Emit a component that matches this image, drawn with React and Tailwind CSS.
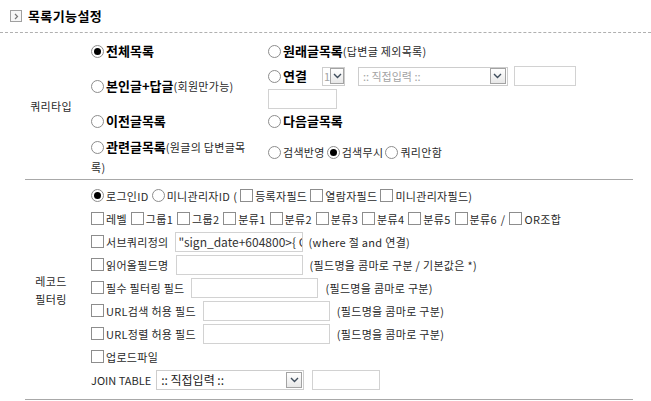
import React from 'react';

function Radio({ checked }) {
  return (
    <span className="flex h-[13px] w-[13px] shrink-0 items-center justify-center rounded-full border border-[#8d8d8d] bg-white">
      {checked && <span className="h-[7px] w-[7px] rounded-full bg-black" />}
    </span>
  );
}

function Check() {
  return <span className="inline-block h-[13px] w-[13px] shrink-0 border border-[#8d8d8d] bg-white" />;
}

function DropBtn({ small }) {
  return (
    <span
      className={`flex h-[16px] shrink-0 items-center justify-center border border-[#a3a3a3] bg-linear-to-b from-white to-[#e8e8e8] ${small ? 'w-[14px]' : 'w-[16px]'}`}
    >
      <svg width="9" height="6" viewBox="0 0 9 6">
        <path d="M1 1l3.5 3.5L8 1" fill="none" stroke="#3f4d5c" strokeWidth="1.4" />
      </svg>
    </span>
  );
}

function Select({ className, text, dim, small }) {
  return (
    <div
      className={`flex h-[19px] items-center justify-between border border-[#cdcdcd] bg-white pr-[1px] tracking-normal ${small ? 'pl-[1px]' : 'pl-[4px]'} ${dim ? 'text-[11px] text-[#a3a3a3]' : 'text-[12px] text-[#222]'} ${className}`}
    >
      <span className="whitespace-nowrap leading-none">{text}</span>
      <DropBtn small={small} />
    </div>
  );
}

function Box({ className }) {
  return <div className={`h-[20px] shrink-0 border border-[#d2d2d2] bg-white ${className}`} />;
}

function Opt({ children, radio, checked }) {
  return (
    <span className="flex items-center gap-[2px]">
      {radio ? <Radio checked={checked} /> : <Check />}
      <span className="whitespace-nowrap">{children}</span>
    </span>
  );
}

function Big({ children, note }) {
  return (
    <span className="whitespace-nowrap">
      <span className="text-[13px] font-bold tracking-normal text-black">{children}</span>
      {note && <span>{note}</span>}
    </span>
  );
}

export default function App() {
  const filterRows = [
    { label: '읽어올필드명', note: '(필드명을 콤마로 구분 / 기본값은 *)' },
    { label: '필수 필터링 필드', note: '(필드명을 콤마로 구분)' },
    { label: 'URL검색 허용 필드', note: '(필드명을 콤마로 구분)' },
    { label: 'URL정렬 허용 필드', note: '(필드명을 콤마로 구분)' },
  ];

  return (
    <div className="h-[401px] w-[651px] overflow-hidden bg-white font-['Noto_Sans_CJK_KR',sans-serif] text-[11px] leading-[20px] tracking-[0.3px] text-[#2a2a2a]">
      {/* header */}
      <div className="flex h-[33px] items-center gap-[6px] border-b border-dashed border-[#b0b0b0] pl-[10px]">
        <span className="flex h-[12px] w-[12px] items-center justify-center border border-[#a0a0a0] bg-[#f7f7f7]">
          <svg width="5" height="7" viewBox="0 0 5 7">
            <path d="M1 1l2.5 2.5L1 6" fill="none" stroke="#777" strokeWidth="1.2" />
          </svg>
        </span>
        <span className="text-[13px] font-bold tracking-[0.4px] text-black">목록기능설정</span>
      </div>

      <div className="ml-[25px] w-[608px]">
        {/* 쿼리타입 */}
        <div className="flex h-[147px] border-b border-[#a8a8a8]">
          <div className="flex w-[52px] items-center justify-center">쿼리타입</div>
          <div className="flex flex-1 flex-col pl-[14px] pt-[6px]">
            <div className="flex h-[24px] items-center">
              <div className="w-[177px]">
                <span className="flex items-center gap-[2px]">
                  <Radio checked />
                  <Big>전체목록</Big>
                </span>
              </div>
              <span className="flex items-center gap-[2px]">
                <Radio />
                <Big note="(답변글 제외목록)">원래글목록</Big>
              </span>
            </div>

            <div className="flex h-[46px]">
              <div className="flex w-[177px] items-center">
                <span className="flex items-center gap-[2px]">
                  <Radio />
                  <Big note="(회원만가능)">본인글+답글</Big>
                </span>
              </div>
              <div className="flex flex-col">
                <div className="flex h-[26px] items-center">
                  <span className="flex items-center gap-[2px]">
                    <Radio />
                    <Big>연결</Big>
                  </span>
                  <Select className="ml-[15px] w-[23px]" text="1" dim small />
                  <Select className="ml-[13px] w-[150px]" text=":: 직접입력 ::" dim />
                  <Box className="ml-[6px] w-[62px] h-[19px]" />
                </div>
                <Box className="w-[69px]" />
              </div>
            </div>

            <div className="flex h-[24px] items-center">
              <div className="w-[177px]">
                <span className="flex items-center gap-[2px]">
                  <Radio />
                  <Big>이전글목록</Big>
                </span>
              </div>
              <span className="flex items-center gap-[2px]">
                <Radio />
                <Big>다음글목록</Big>
              </span>
            </div>

            <div className="flex flex-1">
              <div className="w-[177px] pt-[4px]">
                <span className="flex items-center gap-[2px]">
                  <Radio />
                  <Big note="(원글의 답변글목">관련글목록</Big>
                </span>
                <div>록)</div>
              </div>
              <div className="pt-[9px]">
                <span className="flex items-center">
                  <Radio />
                  <span className="ml-[2px] mr-[2px]">검색반영</span>
                  <Radio checked />
                  <span className="ml-[2px] mr-[2px]">검색무시</span>
                  <Radio />
                  <span className="ml-[2px]">쿼리안함</span>
                </span>
              </div>
            </div>
          </div>
        </div>

        {/* 레코드 필터링 */}
        <div className="flex h-[220px] border-b border-[#a8a8a8]">
          <div className="flex w-[52px] flex-col items-center justify-center leading-[18px]">
            <span>레코드</span>
            <span>필터링</span>
          </div>
          <div className="flex flex-1 flex-col pl-[14px] pt-[4px]">
            <div className="flex h-[23px] items-center gap-[3px]">
              <Opt radio checked>로그인ID</Opt>
              <Opt radio>미니관리자ID</Opt>
              <span>(</span>
              <Opt>등록자필드</Opt>
              <Opt>열람자필드</Opt>
              <Opt>미니관리자필드)</Opt>
            </div>

            <div className="flex h-[23px] items-center gap-[4px]">
              <Opt>레벨</Opt>
              <Opt>그룹1</Opt>
              <Opt>그룹2</Opt>
              <Opt>분류1</Opt>
              <Opt>분류2</Opt>
              <Opt>분류3</Opt>
              <Opt>분류4</Opt>
              <Opt>분류5</Opt>
              <Opt>분류6</Opt>
              <span>/</span>
              <Opt>OR조합</Opt>
            </div>

            <div className="flex h-[23px] items-center gap-[6px]">
              <Opt>서브쿼리정의</Opt>
              <input
                readOnly
                value={'"sign_date+604800>{ GMT }"'}
                className="h-[20px] w-[128px] shrink-0 border border-[#d2d2d2] bg-white pl-[3px] text-[12px] tracking-normal text-[#333] outline-none"
              />
              <span className="whitespace-nowrap">(where 절 and 연결)</span>
            </div>

            {filterRows.map((r) => (
              <div key={r.label} className="flex h-[23px] items-center gap-[7px]">
                <Opt>{r.label}</Opt>
                <Box className="w-[127px]" />
                <span className="whitespace-nowrap">{r.note}</span>
              </div>
            ))}

            <div className="flex h-[23px] items-center">
              <Opt>업로드파일</Opt>
            </div>

            <div className="flex h-[23px] items-center gap-[5px]">
              <span className="whitespace-nowrap tracking-normal">JOIN TABLE</span>
              <Select className="w-[148px] h-[20px]" text=":: 직접입력 ::" />
              <Box className="ml-[3px] w-[68px]" />
            </div>
          </div>
        </div>
      </div>
    </div>
  );
}
